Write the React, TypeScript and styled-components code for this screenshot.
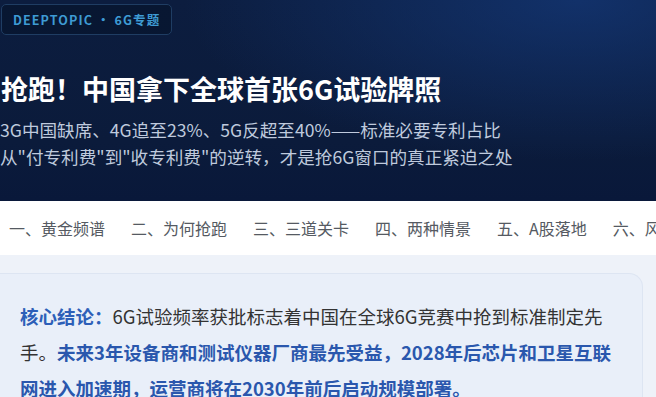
import React from "react";
import styled, { createGlobalStyle } from "styled-components";

const GlobalStyle = createGlobalStyle`
  html, body {
    margin: 0;
    padding: 0;
    background: #eef2f9;
    font-family: "Noto Sans CJK SC", "Noto Sans", sans-serif;
    overflow: hidden;
  }
`;

// Header
const Hero = styled.header`
  height: 201px;
  box-sizing: border-box;
  padding: 4px 0 0 1px;
  background:
    radial-gradient(ellipse 60% 80% at 88% 0%, rgba(20, 56, 120, 0.75) 0%, rgba(20, 56, 120, 0) 100%),
    linear-gradient(180deg, #0c1d3f 0%, #0b1b3b 70%, #09183a 100%);
  display: flex;
  flex-direction: column;
  align-items: flex-start;
`;

const Badge = styled.div`
  height: 31px;
  box-sizing: border-box;
  display: flex;
  align-items: center;
  padding: 0 11px;
  border: 1px solid #1f3d63;
  border-radius: 5px;
  background: rgba(6, 18, 40, 0.55);
  color: #3e9bd4;
  font-size: 12.5px;
  font-weight: 700;
  letter-spacing: 1.1px;
`;

const Title = styled.h1`
  margin: 36px 0 0;
  font-size: 27px;
  line-height: 35px;
  font-weight: 700;
  color: #ffffff;
`;

const Subtitle = styled.p`
  margin: 10px 0 0 -1px;
  font-size: 17.6px;
  line-height: 27px;
  color: #bfcadd;
`;

// Navigation
const Nav = styled.nav`
  height: 54px;
  background: #ffffff;
  display: flex;
  align-items: center;
  gap: 26px;
  padding-left: 9px;
  white-space: nowrap;
  overflow: hidden;
`;

const NavItem = styled.span`
  font-size: 16px;
  color: #555a62;
  flex-shrink: 0;
`;

// Conclusion card
const Body = styled.main`
  padding-top: 18px;
`;

const Card = styled.section`
  width: 643px;
  box-sizing: border-box;
  padding: 24px 24px 30px 20px;
  background: #e9eff9;
  border: 1px solid #dde5f2;
  border-left: none;
  border-radius: 0 14px 14px 0;
`;

const Text = styled.p`
  margin: 0;
  font-size: 18.5px;
  line-height: 36px;
  color: #333;
`;

const Lead = styled.strong<{ $dark?: boolean }>`
  font-weight: 700;
  color: ${(p) => (p.$dark ? "#2a57ad" : "#2d5fb8")};
`;

const navItems = [
  "一、黄金频谱",
  "二、为何抢跑",
  "三、三道关卡",
  "四、两种情景",
  "五、A股落地",
  "六、风险提示",
];

const App = () => {
  return (
    <>
      <GlobalStyle />
      <Hero>
        <Badge>DEEPTOPIC · 6G专题</Badge>
        <Title>抢跑！中国拿下全球首张6G试验牌照</Title>
        <Subtitle>
          3G中国缺席、4G追至23%、5G反超至40%——标准必要专利占比
          <br />
          从"付专利费"到"收专利费"的逆转，才是抢6G窗口的真正紧迫之处
        </Subtitle>
      </Hero>
      <Nav>
        {navItems.map((item) => (
          <NavItem key={item}>{item}</NavItem>
        ))}
      </Nav>
      <Body>
        <Card>
          <Text>
            <Lead>核心结论：</Lead>6G试验频率获批标志着中国在全球6G竞赛中抢到标准制定先手。
            <Lead $dark>
              未来3年设备商和测试仪器厂商最先受益，2028年后芯片和卫星互联网进入加速期，运营商将在2030年前后启动规模部署。
            </Lead>
          </Text>
        </Card>
      </Body>
    </>
  );
};

export default App;
